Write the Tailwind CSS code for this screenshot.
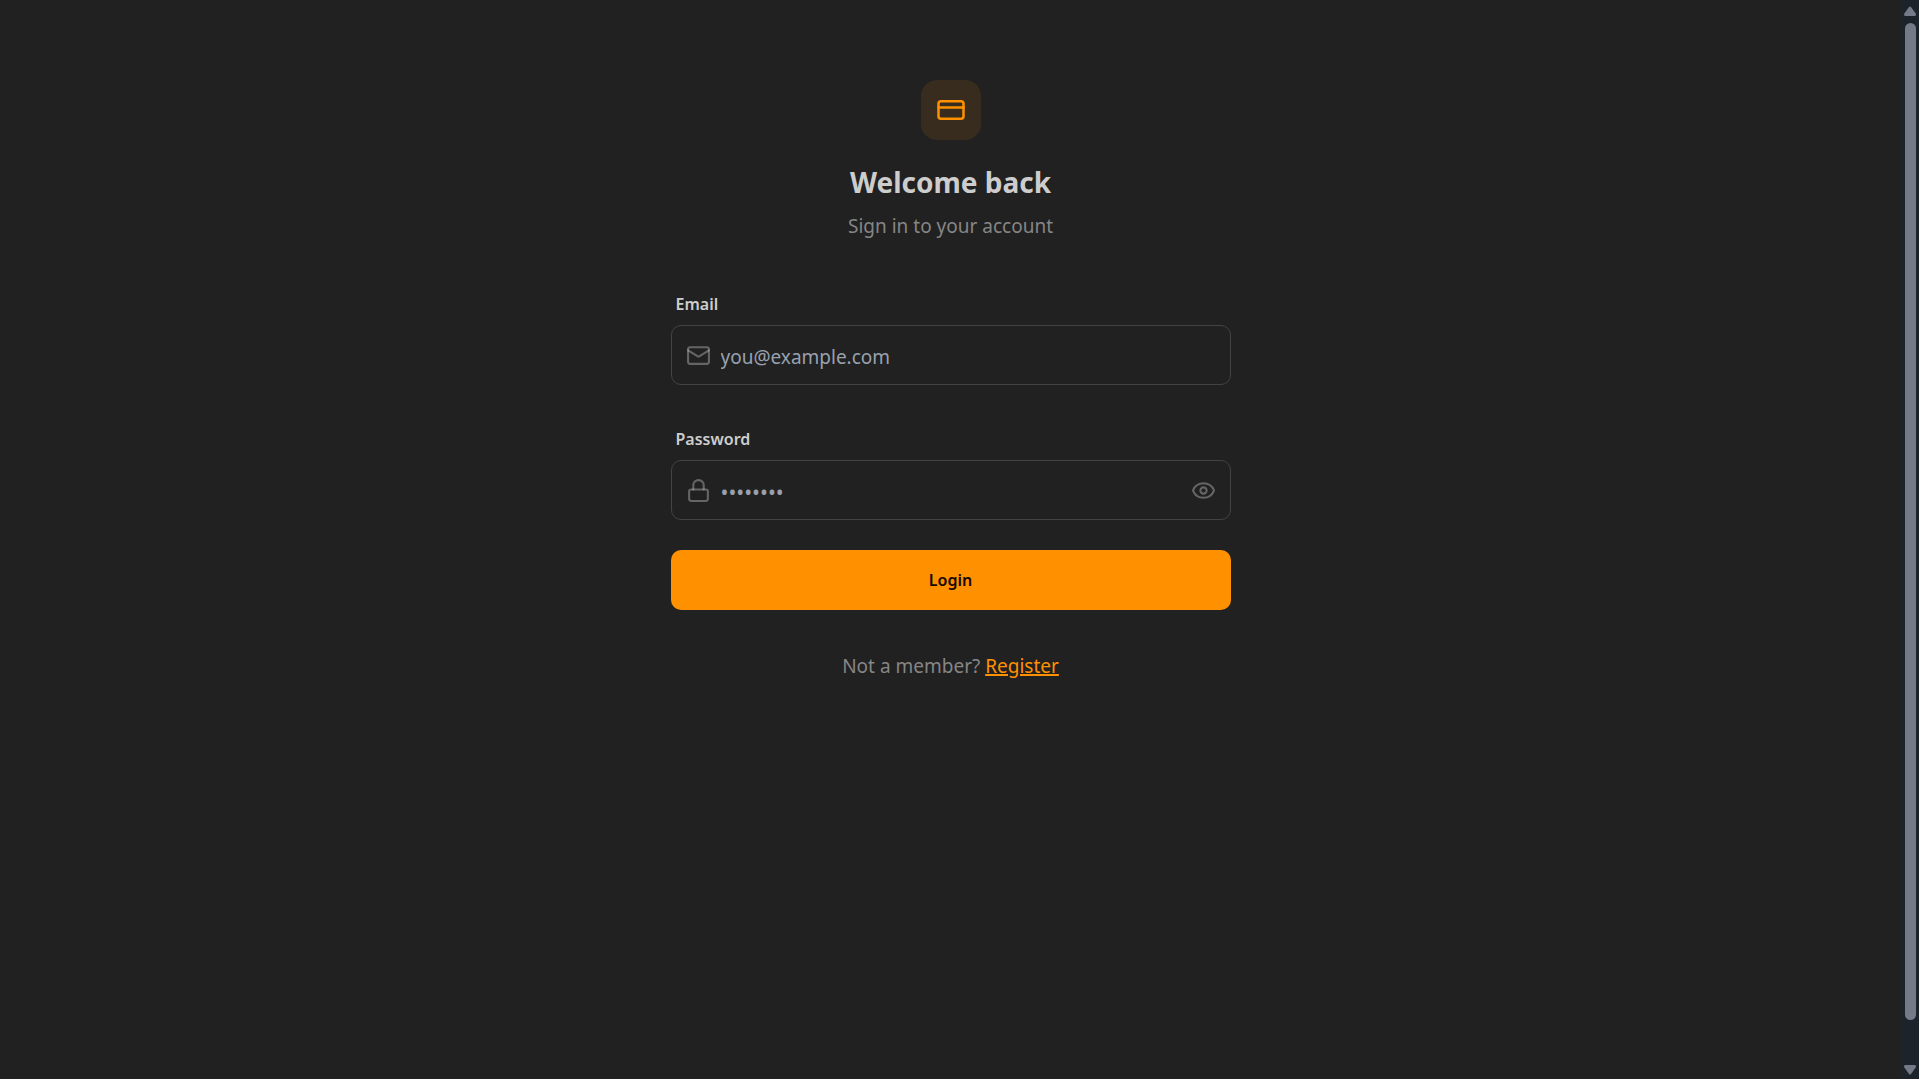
<!DOCTYPE html>
<html lang="en">
<head>
<meta charset="utf-8">
<meta name="viewport" content="width=device-width, initial-scale=1">
<title>Login</title>
<script src="https://cdn.jsdelivr.net/npm/@tailwindcss/browser@4"></script>
</head>
<body class="flex min-h-screen bg-[#212121] font-['Noto_Sans','Open_Sans',sans-serif] text-[#cdcdcd]">
  <main class="flex flex-1 justify-center px-4 pt-20">
    <div class="w-full max-w-[560px]">
      <header class="flex flex-col items-center">
        <div class="flex size-[60px] items-center justify-center rounded-2xl bg-[#ff9000]/10 text-[#ff9000]">
          <svg class="size-[30px]" viewBox="0 0 24 24" fill="none" stroke="currentColor" stroke-width="2" stroke-linecap="round" stroke-linejoin="round" aria-hidden="true"><rect width="20" height="14" x="2" y="5" rx="2"/><path d="M2 10h20"/></svg>
        </div>
        <h1 class="mt-[22px] text-[28px] leading-10 font-bold">Welcome back</h1>
        <p class="mt-[10px] text-[19px] leading-7 text-[#868686]">Sign in to your account</p>
      </header>
      <form class="mt-10">
        <label for="email" class="block px-[5px] pt-3 pb-[9px] text-[16px] leading-6 font-semibold">Email</label>
        <div class="flex h-[60px] items-center gap-[10px] rounded-[10px] border border-[#434343] px-[14px]">
          <svg class="size-[25px] shrink-0 text-[#cdcdcd]/40" viewBox="0 0 24 24" fill="none" stroke="currentColor" stroke-width="2" stroke-linecap="round" stroke-linejoin="round" aria-hidden="true"><rect width="20" height="16" x="2" y="4" rx="2"/><path d="m22 7-8.97 5.7a1.94 1.94 0 0 1-2.06 0L2 7"/></svg>
          <input id="email" type="email" placeholder="you@example.com" class="min-w-0 flex-1 bg-transparent pt-[3px] text-[19px] leading-7 outline-none placeholder:text-[#99a1af]">
        </div>
        <label for="password" class="mt-[30px] block px-[5px] pt-3 pb-[9px] text-[16px] leading-6 font-semibold">Password</label>
        <div class="flex h-[60px] items-center gap-[10px] rounded-[10px] border border-[#434343] px-[14px]">
          <svg class="size-[25px] shrink-0 text-[#cdcdcd]/40" viewBox="0 0 24 24" fill="none" stroke="currentColor" stroke-width="2" stroke-linecap="round" stroke-linejoin="round" aria-hidden="true"><rect width="18" height="11" x="3" y="11" rx="2"/><path d="M7 11V7a5 5 0 0 1 10 0v4"/></svg>
          <input id="password" type="password" placeholder="••••••••" class="min-w-0 flex-1 bg-transparent pt-[3px] text-[21px] leading-7 outline-none placeholder:text-[#99a1af]">
          <button type="button" aria-label="Show password" class="text-[#cdcdcd]/40">
            <svg class="size-[25px]" viewBox="0 0 24 24" fill="none" stroke="currentColor" stroke-width="2" stroke-linecap="round" stroke-linejoin="round" aria-hidden="true"><path d="M2.062 12.348a1 1 0 0 1 0-.696 10.75 10.75 0 0 1 19.876 0 1 1 0 0 1 0 .696 10.75 10.75 0 0 1-19.876 0"/><circle cx="12" cy="12" r="3"/></svg>
          </button>
        </div>
        <button type="submit" class="mt-[30px] h-[60px] w-full rounded-[10px] bg-[#ff9000] text-[16px] font-semibold text-[#160800]">Login</button>
      </form>
      <p class="mt-10 text-center text-[19px] leading-8 text-[#868686]">Not a member? <a href="#" class="text-[#ff9000] underline decoration-2">Register</a></p>
    </div>
  </main>
  <div class="sticky top-0 flex h-screen w-[18px] flex-col items-center bg-[#1d232a] pt-[6px] pb-1 text-[#747b88]" aria-hidden="true">
    <svg class="h-[10px] w-3 shrink-0" viewBox="0 0 12 10" fill="currentColor"><path d="M5 1Q6 0 7 1L12 8Q12 10 11 10H1Q0 10 0 8Z"/></svg>
    <div class="mt-[7px] w-[11px] grow-[997] rounded-full bg-[#747b88]"></div>
    <div class="grow-[45]"></div>
    <svg class="h-[10px] w-3 shrink-0" viewBox="0 0 12 10" fill="currentColor"><path d="M5 9Q6 10 7 9L12 2Q12 0 11 0H1Q0 0 0 2Z"/></svg>
  </div>
</body>
</html>
